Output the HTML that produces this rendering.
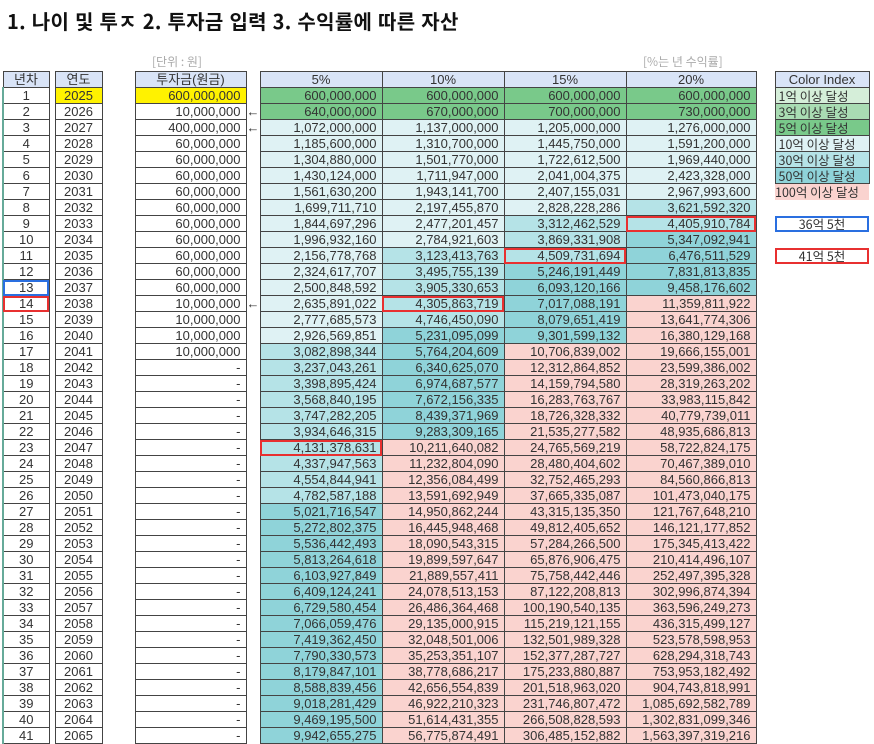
<!DOCTYPE html>
<html><head><meta charset="utf-8"><style>
body{margin:0;width:874px;height:743px;overflow:hidden;background:#fff;font-family:"Liberation Sans","Noto Sans CJK KR",sans-serif;color:#333;}
.t{position:absolute;left:7px;top:6px;font-size:20px;font-weight:bold;color:#111;white-space:nowrap;font-family:"Noto Sans CJK KR",sans-serif;letter-spacing:0.3px;word-spacing:1px}
.u{position:absolute;font-size:12px;color:#aaa;font-family:"Noto Sans CJK KR",sans-serif}
table{position:absolute;left:2px;top:71px;border-collapse:collapse;table-layout:fixed;font-size:13px;font-family:"Liberation Sans","Noto Sans CJK KR",sans-serif}
td{height:15px;padding:0 5px 0 0;border:1px solid #444;text-align:right;white-space:nowrap;overflow:hidden;line-height:15px}
td.c0{text-align:center;padding:0;border-left:2px solid #6a9}
td.yr{text-align:center;padding:0}
td.n{border:none;border-left:none}
td.ar{border:none;text-align:left;padding:0;overflow:visible}
tr.h td{background:#d9e4f7;text-align:center;padding:0}
tr.h td.n{background:none}
.g{background:#79c98a}.a{background:#dff2f4}.b{background:#b5e3e7}.c{background:#8fd3d9}.p{background:#fad3cf}
.y{background:#fff200}
.r{outline:2px solid #e83030;outline-offset:-2px}
.bl{outline:2px solid #2a6fe0;outline-offset:-2px}
.ci{text-align:left;padding-left:3px;font-family:"Noto Sans CJK KR",sans-serif;font-size:12.5px}
</style></head><body>
<div class="t">1. 나이 및 투ㅈ 2. 투자금 입력 3. 수익률에 따른 자산</div>
<div class="u" style="left:152px;top:53px">[단위 : 원]</div>
<div class="u" style="left:643px;top:53px">[%는 년 수익률]</div>
<table>
<colgroup><col style="width:46px"><col style="width:5px"><col style="width:47px"><col style="width:33px"><col style="width:111px"><col style="width:10px"><col style="width:122px"><col style="width:122px"><col style="width:122px"><col style="width:130px"><col style="width:19px"><col style="width:94px"></colgroup>
<tr class="h"><td>년차</td><td class="n"></td><td>연도</td><td class="n"></td><td>투자금(원금)</td><td class="n"></td><td>5%</td><td>10%</td><td>15%</td><td>20%</td><td class="n"></td><td>Color Index</td></tr>
<tr><td class="c0">1</td><td class="n"></td><td class="yr y">2025</td><td class="n"></td><td class="y">600,000,000</td><td class="ar"></td><td class="g">600,000,000</td><td class="g">600,000,000</td><td class="g">600,000,000</td><td class="g">600,000,000</td><td class="n"></td><td class="ci" style="background:#d5eed9">1억 이상 달성</td></tr>
<tr><td class="c0">2</td><td class="n"></td><td class="yr">2026</td><td class="n"></td><td>10,000,000</td><td class="ar">←</td><td class="g">640,000,000</td><td class="g">670,000,000</td><td class="g">700,000,000</td><td class="g">730,000,000</td><td class="n"></td><td class="ci" style="background:#a9dcb3">3억 이상 달성</td></tr>
<tr><td class="c0">3</td><td class="n"></td><td class="yr">2027</td><td class="n"></td><td>400,000,000</td><td class="ar">←</td><td class="a">1,072,000,000</td><td class="a">1,137,000,000</td><td class="a">1,205,000,000</td><td class="a">1,276,000,000</td><td class="n"></td><td class="ci g">5억 이상 달성</td></tr>
<tr><td class="c0">4</td><td class="n"></td><td class="yr">2028</td><td class="n"></td><td>60,000,000</td><td class="ar"></td><td class="a">1,185,600,000</td><td class="a">1,310,700,000</td><td class="a">1,445,750,000</td><td class="a">1,591,200,000</td><td class="n"></td><td class="ci a">10억 이상 달성</td></tr>
<tr><td class="c0">5</td><td class="n"></td><td class="yr">2029</td><td class="n"></td><td>60,000,000</td><td class="ar"></td><td class="a">1,304,880,000</td><td class="a">1,501,770,000</td><td class="a">1,722,612,500</td><td class="a">1,969,440,000</td><td class="n"></td><td class="ci b">30억 이상 달성</td></tr>
<tr><td class="c0">6</td><td class="n"></td><td class="yr">2030</td><td class="n"></td><td>60,000,000</td><td class="ar"></td><td class="a">1,430,124,000</td><td class="a">1,711,947,000</td><td class="a">2,041,004,375</td><td class="a">2,423,328,000</td><td class="n"></td><td class="ci c">50억 이상 달성</td></tr>
<tr><td class="c0">7</td><td class="n"></td><td class="yr">2031</td><td class="n"></td><td>60,000,000</td><td class="ar"></td><td class="a">1,561,630,200</td><td class="a">1,943,141,700</td><td class="a">2,407,155,031</td><td class="a">2,967,993,600</td><td class="n"></td><td class="ci p" style="border:none;padding-left:0">100억 이상 달성</td></tr>
<tr><td class="c0">8</td><td class="n"></td><td class="yr">2032</td><td class="n"></td><td>60,000,000</td><td class="ar"></td><td class="a">1,699,711,710</td><td class="a">2,197,455,870</td><td class="a">2,828,228,286</td><td class="b">3,621,592,320</td><td class="n"></td><td class="n"></td></tr>
<tr><td class="c0">9</td><td class="n"></td><td class="yr">2033</td><td class="n"></td><td>60,000,000</td><td class="ar"></td><td class="a">1,844,697,296</td><td class="a">2,477,201,457</td><td class="b">3,312,462,529</td><td class="b r">4,405,910,784</td><td class="n"></td><td class="bl" style="text-align:center;padding:0;border:none;font-family:'Noto Sans CJK KR',sans-serif;font-size:12.5px">36억 5천</td></tr>
<tr><td class="c0">10</td><td class="n"></td><td class="yr">2034</td><td class="n"></td><td>60,000,000</td><td class="ar"></td><td class="a">1,996,932,160</td><td class="a">2,784,921,603</td><td class="b">3,869,331,908</td><td class="c">5,347,092,941</td><td class="n"></td><td class="n"></td></tr>
<tr><td class="c0">11</td><td class="n"></td><td class="yr">2035</td><td class="n"></td><td>60,000,000</td><td class="ar"></td><td class="a">2,156,778,768</td><td class="b">3,123,413,763</td><td class="b r">4,509,731,694</td><td class="c">6,476,511,529</td><td class="n"></td><td class="r" style="text-align:center;padding:0;border:none;font-family:'Noto Sans CJK KR',sans-serif;font-size:12.5px">41억 5천</td></tr>
<tr><td class="c0">12</td><td class="n"></td><td class="yr">2036</td><td class="n"></td><td>60,000,000</td><td class="ar"></td><td class="a">2,324,617,707</td><td class="b">3,495,755,139</td><td class="c">5,246,191,449</td><td class="c">7,831,813,835</td><td class="n"></td><td class="n"></td></tr>
<tr><td class="c0 bl">13</td><td class="n"></td><td class="yr">2037</td><td class="n"></td><td>60,000,000</td><td class="ar"></td><td class="a">2,500,848,592</td><td class="b">3,905,330,653</td><td class="c">6,093,120,166</td><td class="c">9,458,176,602</td><td class="n"></td><td class="n"></td></tr>
<tr><td class="c0 r">14</td><td class="n"></td><td class="yr">2038</td><td class="n"></td><td>10,000,000</td><td class="ar">←</td><td class="a">2,635,891,022</td><td class="b r">4,305,863,719</td><td class="c">7,017,088,191</td><td class="p">11,359,811,922</td><td class="n"></td><td class="n"></td></tr>
<tr><td class="c0">15</td><td class="n"></td><td class="yr">2039</td><td class="n"></td><td>10,000,000</td><td class="ar"></td><td class="a">2,777,685,573</td><td class="b">4,746,450,090</td><td class="c">8,079,651,419</td><td class="p">13,641,774,306</td><td class="n"></td><td class="n"></td></tr>
<tr><td class="c0">16</td><td class="n"></td><td class="yr">2040</td><td class="n"></td><td>10,000,000</td><td class="ar"></td><td class="a">2,926,569,851</td><td class="c">5,231,095,099</td><td class="c">9,301,599,132</td><td class="p">16,380,129,168</td><td class="n"></td><td class="n"></td></tr>
<tr><td class="c0">17</td><td class="n"></td><td class="yr">2041</td><td class="n"></td><td>10,000,000</td><td class="ar"></td><td class="b">3,082,898,344</td><td class="c">5,764,204,609</td><td class="p">10,706,839,002</td><td class="p">19,666,155,001</td><td class="n"></td><td class="n"></td></tr>
<tr><td class="c0">18</td><td class="n"></td><td class="yr">2042</td><td class="n"></td><td>-</td><td class="ar"></td><td class="b">3,237,043,261</td><td class="c">6,340,625,070</td><td class="p">12,312,864,852</td><td class="p">23,599,386,002</td><td class="n"></td><td class="n"></td></tr>
<tr><td class="c0">19</td><td class="n"></td><td class="yr">2043</td><td class="n"></td><td>-</td><td class="ar"></td><td class="b">3,398,895,424</td><td class="c">6,974,687,577</td><td class="p">14,159,794,580</td><td class="p">28,319,263,202</td><td class="n"></td><td class="n"></td></tr>
<tr><td class="c0">20</td><td class="n"></td><td class="yr">2044</td><td class="n"></td><td>-</td><td class="ar"></td><td class="b">3,568,840,195</td><td class="c">7,672,156,335</td><td class="p">16,283,763,767</td><td class="p">33,983,115,842</td><td class="n"></td><td class="n"></td></tr>
<tr><td class="c0">21</td><td class="n"></td><td class="yr">2045</td><td class="n"></td><td>-</td><td class="ar"></td><td class="b">3,747,282,205</td><td class="c">8,439,371,969</td><td class="p">18,726,328,332</td><td class="p">40,779,739,011</td><td class="n"></td><td class="n"></td></tr>
<tr><td class="c0">22</td><td class="n"></td><td class="yr">2046</td><td class="n"></td><td>-</td><td class="ar"></td><td class="b">3,934,646,315</td><td class="c">9,283,309,165</td><td class="p">21,535,277,582</td><td class="p">48,935,686,813</td><td class="n"></td><td class="n"></td></tr>
<tr><td class="c0">23</td><td class="n"></td><td class="yr">2047</td><td class="n"></td><td>-</td><td class="ar"></td><td class="b r">4,131,378,631</td><td class="p">10,211,640,082</td><td class="p">24,765,569,219</td><td class="p">58,722,824,175</td><td class="n"></td><td class="n"></td></tr>
<tr><td class="c0">24</td><td class="n"></td><td class="yr">2048</td><td class="n"></td><td>-</td><td class="ar"></td><td class="b">4,337,947,563</td><td class="p">11,232,804,090</td><td class="p">28,480,404,602</td><td class="p">70,467,389,010</td><td class="n"></td><td class="n"></td></tr>
<tr><td class="c0">25</td><td class="n"></td><td class="yr">2049</td><td class="n"></td><td>-</td><td class="ar"></td><td class="b">4,554,844,941</td><td class="p">12,356,084,499</td><td class="p">32,752,465,293</td><td class="p">84,560,866,813</td><td class="n"></td><td class="n"></td></tr>
<tr><td class="c0">26</td><td class="n"></td><td class="yr">2050</td><td class="n"></td><td>-</td><td class="ar"></td><td class="b">4,782,587,188</td><td class="p">13,591,692,949</td><td class="p">37,665,335,087</td><td class="p">101,473,040,175</td><td class="n"></td><td class="n"></td></tr>
<tr><td class="c0">27</td><td class="n"></td><td class="yr">2051</td><td class="n"></td><td>-</td><td class="ar"></td><td class="c">5,021,716,547</td><td class="p">14,950,862,244</td><td class="p">43,315,135,350</td><td class="p">121,767,648,210</td><td class="n"></td><td class="n"></td></tr>
<tr><td class="c0">28</td><td class="n"></td><td class="yr">2052</td><td class="n"></td><td>-</td><td class="ar"></td><td class="c">5,272,802,375</td><td class="p">16,445,948,468</td><td class="p">49,812,405,652</td><td class="p">146,121,177,852</td><td class="n"></td><td class="n"></td></tr>
<tr><td class="c0">29</td><td class="n"></td><td class="yr">2053</td><td class="n"></td><td>-</td><td class="ar"></td><td class="c">5,536,442,493</td><td class="p">18,090,543,315</td><td class="p">57,284,266,500</td><td class="p">175,345,413,422</td><td class="n"></td><td class="n"></td></tr>
<tr><td class="c0">30</td><td class="n"></td><td class="yr">2054</td><td class="n"></td><td>-</td><td class="ar"></td><td class="c">5,813,264,618</td><td class="p">19,899,597,647</td><td class="p">65,876,906,475</td><td class="p">210,414,496,107</td><td class="n"></td><td class="n"></td></tr>
<tr><td class="c0">31</td><td class="n"></td><td class="yr">2055</td><td class="n"></td><td>-</td><td class="ar"></td><td class="c">6,103,927,849</td><td class="p">21,889,557,411</td><td class="p">75,758,442,446</td><td class="p">252,497,395,328</td><td class="n"></td><td class="n"></td></tr>
<tr><td class="c0">32</td><td class="n"></td><td class="yr">2056</td><td class="n"></td><td>-</td><td class="ar"></td><td class="c">6,409,124,241</td><td class="p">24,078,513,153</td><td class="p">87,122,208,813</td><td class="p">302,996,874,394</td><td class="n"></td><td class="n"></td></tr>
<tr><td class="c0">33</td><td class="n"></td><td class="yr">2057</td><td class="n"></td><td>-</td><td class="ar"></td><td class="c">6,729,580,454</td><td class="p">26,486,364,468</td><td class="p">100,190,540,135</td><td class="p">363,596,249,273</td><td class="n"></td><td class="n"></td></tr>
<tr><td class="c0">34</td><td class="n"></td><td class="yr">2058</td><td class="n"></td><td>-</td><td class="ar"></td><td class="c">7,066,059,476</td><td class="p">29,135,000,915</td><td class="p">115,219,121,155</td><td class="p">436,315,499,127</td><td class="n"></td><td class="n"></td></tr>
<tr><td class="c0">35</td><td class="n"></td><td class="yr">2059</td><td class="n"></td><td>-</td><td class="ar"></td><td class="c">7,419,362,450</td><td class="p">32,048,501,006</td><td class="p">132,501,989,328</td><td class="p">523,578,598,953</td><td class="n"></td><td class="n"></td></tr>
<tr><td class="c0">36</td><td class="n"></td><td class="yr">2060</td><td class="n"></td><td>-</td><td class="ar"></td><td class="c">7,790,330,573</td><td class="p">35,253,351,107</td><td class="p">152,377,287,727</td><td class="p">628,294,318,743</td><td class="n"></td><td class="n"></td></tr>
<tr><td class="c0">37</td><td class="n"></td><td class="yr">2061</td><td class="n"></td><td>-</td><td class="ar"></td><td class="c">8,179,847,101</td><td class="p">38,778,686,217</td><td class="p">175,233,880,887</td><td class="p">753,953,182,492</td><td class="n"></td><td class="n"></td></tr>
<tr><td class="c0">38</td><td class="n"></td><td class="yr">2062</td><td class="n"></td><td>-</td><td class="ar"></td><td class="c">8,588,839,456</td><td class="p">42,656,554,839</td><td class="p">201,518,963,020</td><td class="p">904,743,818,991</td><td class="n"></td><td class="n"></td></tr>
<tr><td class="c0">39</td><td class="n"></td><td class="yr">2063</td><td class="n"></td><td>-</td><td class="ar"></td><td class="c">9,018,281,429</td><td class="p">46,922,210,323</td><td class="p">231,746,807,472</td><td class="p">1,085,692,582,789</td><td class="n"></td><td class="n"></td></tr>
<tr><td class="c0">40</td><td class="n"></td><td class="yr">2064</td><td class="n"></td><td>-</td><td class="ar"></td><td class="c">9,469,195,500</td><td class="p">51,614,431,355</td><td class="p">266,508,828,593</td><td class="p">1,302,831,099,346</td><td class="n"></td><td class="n"></td></tr>
<tr><td class="c0">41</td><td class="n"></td><td class="yr">2065</td><td class="n"></td><td>-</td><td class="ar"></td><td class="c">9,942,655,275</td><td class="p">56,775,874,491</td><td class="p">306,485,152,882</td><td class="p">1,563,397,319,216</td><td class="n"></td><td class="n"></td></tr>
</table>
</body></html>
